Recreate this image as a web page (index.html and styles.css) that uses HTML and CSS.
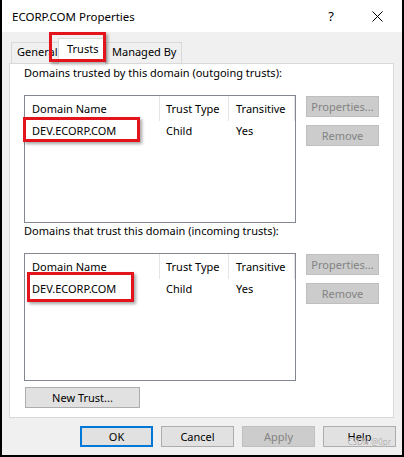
FILE: index.html
```html
<!DOCTYPE html>
<html lang="en">
<head>
  <meta charset="UTF-8" />
  <title>ECORP.COM Properties</title>
  <link rel="stylesheet" href="styles.css">
</head>
<body>
  <div class="window">
    <div class="titlebar">
      <span class="title">ECORP.COM Properties</span>
      <span class="qmark">?</span>
      <span class="close">
        <svg width="11" height="11" viewBox="0 0 11 11"><path d="M0.5 0.5 L10.5 10.5 M10.5 0.5 L0.5 10.5" stroke="#000" stroke-width="1" fill="none"/></svg>
      </span>
    </div>

    <div class="tabs">
      <div class="tab">General</div>
      <div class="tab active">Trusts</div>
      <div class="tab">Managed By</div>
      <div class="mark mark-tab"></div>
    </div>

    <div class="panel">
      <p class="label">Domains trusted by this domain (outgoing trusts):</p>
      <div class="group">
        <div class="list">
          <div class="row head">
            <span class="c1">Domain Name</span><span class="c2">Trust Type</span><span class="c3">Transitive</span>
          </div>
          <div class="row">
            <span class="c1">DEV.ECORP.COM</span><span class="c2">Child</span><span class="c3">Yes</span>
          </div>
          <div class="mark mark-out"></div>
        </div>
        <div class="side">
          <button class="btn" disabled>Properties...</button>
          <button class="btn" disabled>Remove</button>
        </div>
      </div>

      <p class="label">Domains that trust this domain (incoming trusts):</p>
      <div class="group">
        <div class="list">
          <div class="row head">
            <span class="c1">Domain Name</span><span class="c2">Trust Type</span><span class="c3">Transitive</span>
          </div>
          <div class="row">
            <span class="c1">DEV.ECORP.COM</span><span class="c2">Child</span><span class="c3">Yes</span>
          </div>
          <div class="mark mark-in"></div>
        </div>
        <div class="side">
          <button class="btn" disabled>Properties...</button>
          <button class="btn" disabled>Remove</button>
        </div>
      </div>

      <button class="btn new-trust">New Trust...</button>
    </div>

    <div class="footer">
      <button class="btn default">OK</button>
      <button class="btn">Cancel</button>
      <button class="btn" disabled>Apply</button>
      <button class="btn">Help</button>
      <span class="watermark">CSDN @0pr</span>
    </div>
  </div>
</body>
</html>
```

FILE: styles.css
```css
* {
  box-sizing: border-box;
}

body {
  margin: 0;
  font-family: "Noto Sans", "Open Sans", sans-serif;
  font-size: 11px;
  color: #000;
}

.window {
  position: relative;
  width: 404px;
  height: 457px;
  background: #f0f0f0;
  border-left: 2px solid #000;
  border-right: 2px solid #000;
  border-bottom: 2px solid #000;
}

.titlebar {
  height: 32px;
  background: #fff;
  display: flex;
  align-items: center;
  padding-left: 10px;
}

.title {
  flex: 1;
  font-size: 11.5px;
}

.qmark {
  width: 46px;
  text-align: center;
  font-size: 13px;
  margin-left: 4px;
}

.close {
  width: 46px;
  display: flex;
  justify-content: center;
  margin-right: 2px;
}

/* tabs */
.tabs {
  position: relative;
  height: 31px;
  display: flex;
  align-items: flex-end;
  padding-left: 9px;
}

.tab {
  height: 21px;
  border: 1px solid #d9d9d9;
  border-bottom: none;
  background: #f0f0f0;
  padding: 0 5px;
  line-height: 17px;
}

.tab:first-child {
  width: 47px;
  border-right: none;
}

.tab.active {
  width: 48px;
  height: 26px;
  margin-bottom: -1px;
  background: #fff;
  padding: 1px 0 0 8px;
  position: relative;
  z-index: 1;
}

.tab:last-child {
  width: 65px;
  border-left: none;
  padding-left: 3px;
}

.panel {
  margin: 0 8px 0 7px;
  height: 355px;
  background: #fff;
  border: 1px solid #d9d9d9;
  padding: 1px 14px 0;
}

.label {
  margin: 0;
  height: 16px;
  line-height: 16px;
  margin-bottom: 14px;
}

.group {
  display: flex;
  gap: 10px;
}

.list {
  position: relative;
  width: 274px;
  height: 128px;
  border: 1px solid #828790;
  background: #fff;
}

.row {
  display: flex;
  height: 17px;
  line-height: 17px;
}

.row.head {
  height: 25px;
  line-height: 25px;
  margin-bottom: 1px;
}

.row span {
  display: block;
  white-space: nowrap;
}

.c1 { width: 135px; padding-left: 7px; }
.c2 { width: 69px; padding-left: 6px; }
.c3 { width: 66px; padding-left: 7px; }

.row.head span {
  border-right: 1px solid #e5e5e5;
}

.side {
  display: flex;
  flex-direction: column;
  gap: 8px;
  padding-top: 1px;
}

.btn {
  width: 73px;
  height: 21px;
  padding: 0;
  font-family: inherit;
  font-size: 11px;
  color: #000;
  background: #e1e1e1;
  border: 1px solid #adadad;
}

.btn:disabled {
  background: #cccccc;
  border-color: #bfbfbf;
  color: #838383;
}

.btn.default {
  border: 2px solid #0078d7;
}

.new-trust {
  width: 115px;
  margin-top: 6px;
  margin-left: 1px;
}

.footer {
  display: flex;
  justify-content: flex-end;
  gap: 8px;
  padding: 8px 6px 0 0;
}

/* annotation overlays */
.mark {
  position: absolute;
  border: 3px solid #e3141b;
  box-shadow: 2px 2px 3px rgba(0, 0, 0, 0.35);
  z-index: 2;
}

.mark-tab {
  left: 47px;
  top: 0;
  width: 57px;
  height: 30px;
}

.mark-out {
  left: -2px;
  top: 21px;
  width: 117px;
  height: 25px;
}

.mark-in {
  left: 2px;
  top: 18px;
  width: 107px;
  height: 30px;
}

.watermark {
  position: absolute;
  right: 11px;
  bottom: 9px;
  font-size: 8px;
  line-height: 9px;
  color: #a8a8a8;
  text-shadow: 0 0 1px #fff;
}
```
